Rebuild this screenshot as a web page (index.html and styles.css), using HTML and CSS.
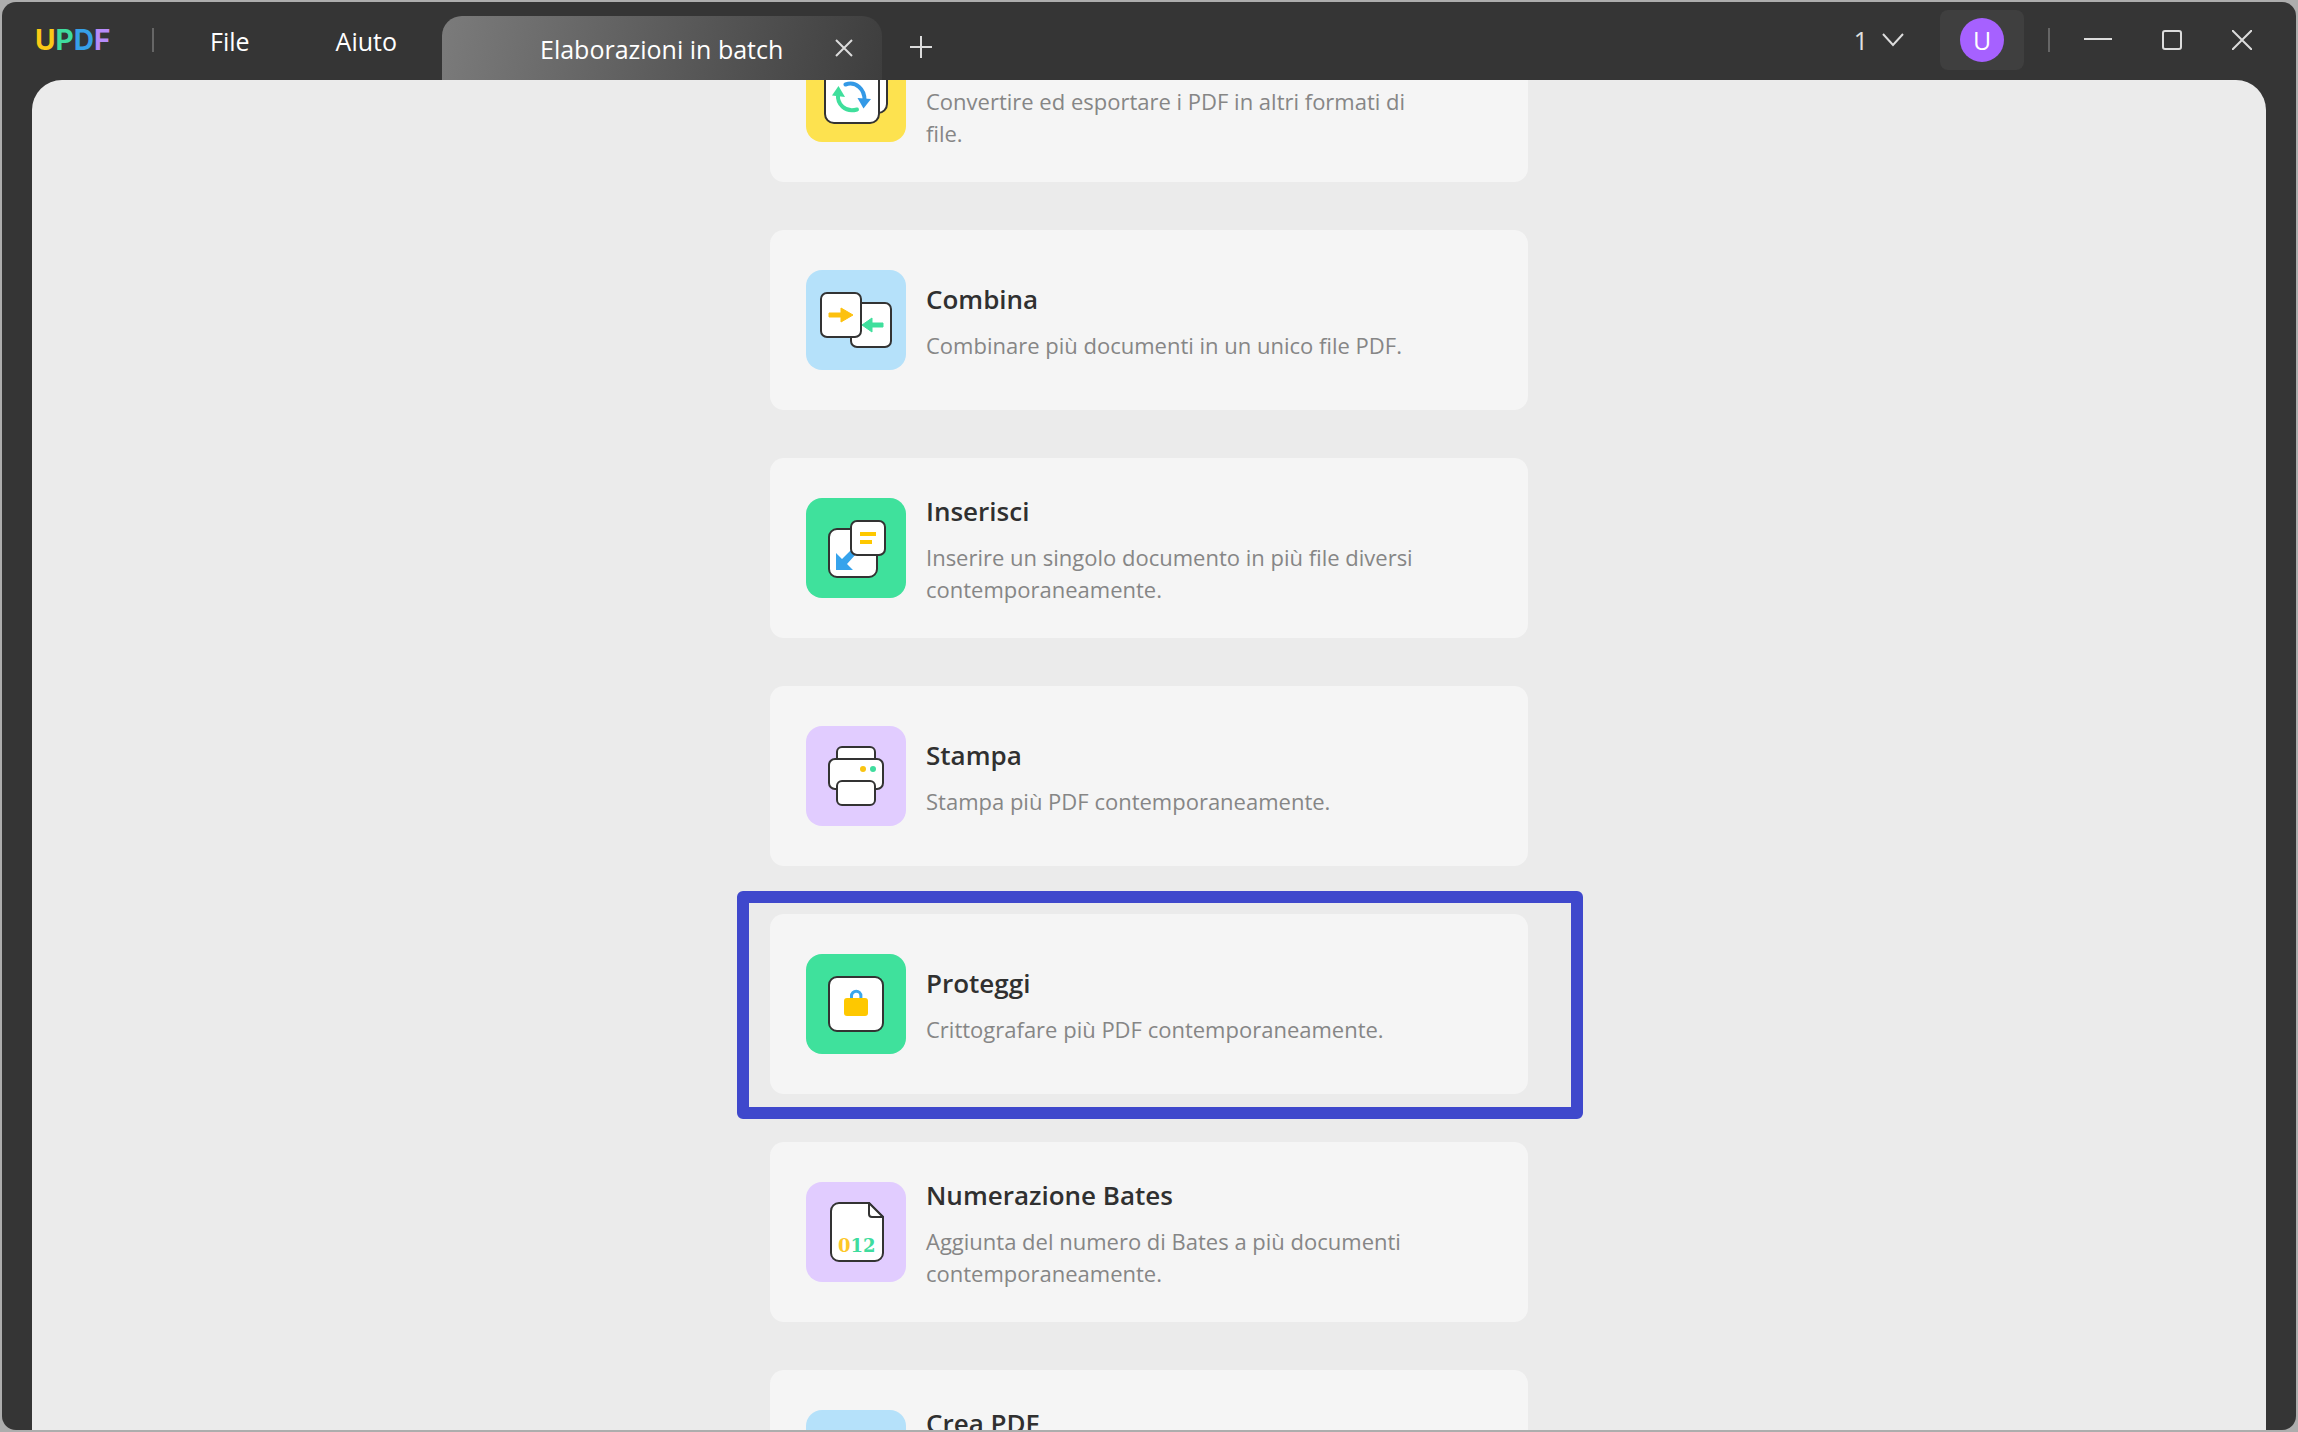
FILE: index.html
```html
<!DOCTYPE html>
<html lang="it">
<head>
<meta charset="utf-8">
<title>UPDF - Elaborazioni in batch</title>
<link rel="stylesheet" href="styles.css">
</head>
<body>
<div class="window">
  <header class="titlebar">
    <div class="brand">
      <span class="logo"><span class="logo-u">U</span><span class="logo-p">P</span><span class="logo-d">D</span><span class="logo-f">F</span></span>
      <span class="divider"></span>
      <nav class="menu">
        <button type="button">File</button>
        <button type="button">Aiuto</button>
      </nav>
    </div>
    <div class="tab">
      <span class="tab-title">Elaborazioni in batch</span>
      <button type="button" class="icon-button" aria-label="Chiudi scheda">
        <svg width="18" height="18" viewBox="0 0 18 18"><path d="M1 1L17 17M17 1L1 17"/></svg>
      </button>
    </div>
    <button type="button" class="icon-button add-tab" aria-label="Nuova scheda">
      <svg width="22" height="22" viewBox="0 0 22 22"><path d="M11 0V22M0 11H22"/></svg>
    </button>
    <div class="controls">
      <button type="button" class="count">1
        <svg width="22" height="14" viewBox="0 0 22 14"><path d="M1 1L11 12L21 1"/></svg>
      </button>
      <button type="button" class="account" aria-label="Account"><span class="avatar">U</span></button>
      <span class="divider"></span>
      <div class="window-buttons">
        <button type="button" class="icon-button" aria-label="Riduci a icona">
          <svg width="28" height="20" viewBox="0 0 28 20"><path d="M0 9H28"/></svg>
        </button>
        <button type="button" class="icon-button" aria-label="Ingrandisci">
          <svg width="20" height="20" viewBox="0 0 20 20"><rect x="1" y="1" width="18" height="18" rx="2"/></svg>
        </button>
        <button type="button" class="icon-button" aria-label="Chiudi">
          <svg width="20" height="20" viewBox="0 0 20 20"><path d="M0 0L20 20M20 0L0 20"/></svg>
        </button>
      </div>
    </div>
  </header>

  <main class="page">
    <div class="tools">
      <button type="button" class="card">
        <svg class="tile yellow" viewBox="0 0 100 100">
          <rect class="sheet" x="34" y="18" width="47" height="53" rx="9"/>
          <rect class="sheet" x="19" y="25" width="54" height="56" rx="9"/>
          <path d="M39.500 42.500C50 39 59 47 58.500 59" fill="none" stroke="#3399e6" stroke-width="4" stroke-linecap="round"/>
          <path d="M51.500 56L65 57L57.500 66.500Z" fill="#3399e6"/>
          <path d="M32 52C31 62 39 71 51 67.500" fill="none" stroke="#3fdf9c" stroke-width="4" stroke-linecap="round"/>
          <path d="M32.500 44L39 55L26 53.500Z" fill="#3fdf9c"/>
        </svg>
        <span class="text">
          <span class="title">Convertire</span>
          <span class="desc">Convertire ed esportare i PDF in altri formati di file.</span>
        </span>
      </button>

      <button type="button" class="card">
        <svg class="tile blue" viewBox="0 0 100 100">
          <rect class="sheet" x="45" y="33" width="40" height="44" rx="6"/>
          <rect class="sheet" x="15" y="23" width="40" height="44" rx="6"/>
          <path d="M23 43H35V38L47 45L35 52V47H23Z" fill="#fdc10f" stroke="#fdc10f" stroke-linejoin="round"/>
          <path d="M77 53H66V48L56 55L66 62V57H77Z" fill="#3fdf9c" stroke="#3fdf9c" stroke-linejoin="round"/>
        </svg>
        <span class="text">
          <span class="title">Combina</span>
          <span class="desc">Combinare più documenti in un unico file PDF.</span>
        </span>
      </button>

      <button type="button" class="card">
        <svg class="tile green" viewBox="0 0 100 100">
          <rect class="sheet" x="23" y="31" width="48" height="48" rx="8"/>
          <path d="M30 55L36 61L46 51L50 56L41 66L47 72H30Z" fill="#36a3ec"/>
          <rect class="sheet" x="45" y="23" width="34" height="34" rx="6"/>
          <path d="M54 34H70V38H54ZM54 42H66V46H54Z" fill="#fec800"/>
        </svg>
        <span class="text">
          <span class="title">Inserisci</span>
          <span class="desc">Inserire un singolo documento in più file diversi contemporaneamente.</span>
        </span>
      </button>

      <button type="button" class="card">
        <svg class="tile purple" viewBox="0 0 100 100">
          <rect class="sheet" x="31" y="21" width="38" height="24" rx="5"/>
          <rect class="sheet" x="23" y="33" width="54" height="30" rx="6"/>
          <rect class="sheet" x="31" y="55" width="38" height="24" rx="5"/>
          <circle cx="57" cy="43" r="3" fill="#f9c412"/>
          <circle cx="67" cy="43" r="3" fill="#3fdc9e"/>
        </svg>
        <span class="text">
          <span class="title">Stampa</span>
          <span class="desc">Stampa più PDF contemporaneamente.</span>
        </span>
      </button>

      <button type="button" class="card highlighted">
        <svg class="tile green" viewBox="0 0 100 100">
          <rect class="sheet" x="23" y="23" width="54" height="54" rx="8"/>
          <path d="M45.500 46V42A4.700 4.700 0 0 1 54.900 42V46" fill="none" stroke="#3aa6ec" stroke-width="3"/>
          <rect x="38" y="44" width="24" height="18" rx="3" fill="#fec800"/>
        </svg>
        <span class="text">
          <span class="title">Proteggi</span>
          <span class="desc">Crittografare più PDF contemporaneamente.</span>
        </span>
      </button>

      <button type="button" class="card">
        <svg class="tile purple" viewBox="0 0 100 100">
          <path class="sheet" d="M33 21H63L77 35V71A8 8 0 0 1 69 79H33A8 8 0 0 1 25 71V29A8 8 0 0 1 33 21Z"/>
          <path class="sheet" d="M63 21V32A3 3 0 0 0 66 35H77Z" stroke-linejoin="round"/>
          <text class="digits" x="32" y="70" fill="#3fdc9e"><tspan fill="#fdc727">0</tspan>12</text>
        </svg>
        <span class="text">
          <span class="title">Numerazione Bates</span>
          <span class="desc">Aggiunta del numero di Bates a più documenti contemporaneamente.</span>
        </span>
      </button>

      <button type="button" class="card">
        <svg class="tile blue" viewBox="0 0 100 100"></svg>
        <span class="text">
          <span class="title">Crea PDF</span>
          <span class="desc">Creare documenti PDF da più file di formati diversi contemporaneamente.</span>
        </span>
      </button>
    </div>
  </main>
</div>
</body>
</html>
```
FILE: styles.css
```css
* {
  box-sizing: border-box;
}

body {
  margin: 0;
  padding: 2px;
  height: 100vh;
  overflow: hidden;
  background: #adadad;
  font-family: "Open Sans", "Noto Sans", sans-serif;
}

button {
  margin: 0;
  padding: 0;
  border: 0;
  background: none;
  color: inherit;
  font: inherit;
}

.window {
  display: flex;
  flex-direction: column;
  height: 100%;
  padding: 0 30px;
  overflow: hidden;
  border-radius: 14px;
  background: #353535;
}

/* Title bar */

.titlebar {
  display: flex;
  flex: none;
  align-items: flex-end;
  height: 78px;
  color: #fff;
  font-size: 25px;
}

.titlebar svg {
  display: block;
  fill: none;
  stroke: #dcdcdc;
  stroke-width: 2px;
}

.brand,
.controls {
  display: flex;
  align-items: center;
  align-self: flex-start;
  height: 76px;
}

.brand {
  width: 410px;
  padding-left: 3px;
}

.logo {
  width: 117px;
  font-family: Inter, sans-serif;
  font-size: 28px;
  font-weight: 700;
}

.logo-u { color: #fbc916; }
.logo-p { color: #3fdc9e; }
.logo-d { color: #36a0e8; }
.logo-f { color: #b78bfa; }

.divider {
  width: 2px;
  height: 24px;
  background: #666;
}

.menu {
  display: flex;
  gap: 86px;
  padding: 2px 0 0 56px;
}

.tab {
  display: flex;
  align-items: center;
  justify-content: space-between;
  width: 440px;
  height: 64px;
  padding: 0 29px 0 98px;
  border-radius: 20px 20px 0 0;
  background: linear-gradient(100deg, #7b7b7b, #5c5c5c 50%, #3e3e3e);
}

.tab-title {
  padding-top: 2px;
}

.add-tab {
  margin: 0 0 22px 28px;
}

.controls {
  margin-left: auto;
}

.count {
  display: flex;
  align-items: center;
  gap: 14px;
  margin-right: 36px;
  color: #e0e0e0;
}

.account {
  display: grid;
  place-items: center;
  width: 84px;
  height: 60px;
  margin-right: 24px;
  border-radius: 8px;
  background: #3f3f3f;
}

.avatar {
  width: 44px;
  height: 44px;
  border-radius: 50%;
  background: #a661ff;
  line-height: 44px;
}

.window-buttons {
  display: flex;
  gap: 50px;
  padding: 0 14px 0 34px;
}

/* Tool list */

.page {
  flex: 1;
  min-height: 0;
  overflow: hidden;
  border-radius: 30px 30px 0 0;
  background: #ebebeb;
}

.tools {
  display: flex;
  flex-direction: column;
  gap: 48px;
  width: 758px;
  max-width: 100%;
  margin: -78px auto 0;
}

.card {
  position: relative;
  display: flex;
  flex: none;
  align-items: center;
  gap: 20px;
  height: 180px;
  padding: 0 36px;
  border-radius: 14px;
  background: #f5f5f5;
  text-align: left;
}

.highlighted::after {
  content: "";
  position: absolute;
  inset: -23px -55px -25px -33px;
  border: 12px solid #3f48cc;
  border-radius: 6px;
}

.tile {
  flex: none;
  width: 100px;
  height: 100px;
  border-radius: 16px;
}

.yellow { background: #fde24f; }
.blue { background: #b5e1fa; }
.green { background: #3fe19c; }
.purple { background: #e1ccff; }

.sheet {
  fill: #fff;
  stroke: #333;
  stroke-width: 2px;
}

.digits {
  font-family: "DejaVu Serif", serif;
  font-size: 18px;
  font-weight: 700;
}

.text {
  display: flex;
  flex-direction: column;
  gap: 10px;
  width: 510px;
}

.title {
  color: #303030;
  font-size: 26px;
  font-weight: 600;
  line-height: 40px;
}

.desc {
  color: #868686;
  font-size: 22px;
  line-height: 32px;
}
```
